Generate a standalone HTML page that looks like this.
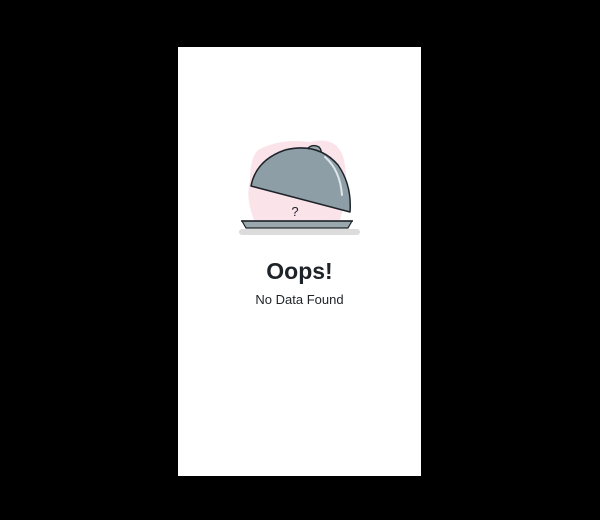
<!DOCTYPE html>
<html><head><style>
html,body{margin:0;padding:0;background:#000;width:600px;height:520px;overflow:hidden}
.card{position:absolute;left:178px;top:47px;width:243px;height:429px;background:#fff}
.t1{position:absolute;left:178px;width:243px;top:258px;text-align:center;font:bold 23px "Liberation Sans",sans-serif;color:#1d2329}
.t2{position:absolute;left:178px;width:243px;top:292px;text-align:center;font:13px "Liberation Sans",sans-serif;color:#1d2329}
</style></head><body>
<div class="card"></div>
<svg style="position:absolute;left:0;top:0" width="600" height="520">
<path d="M258 150 Q280 138 310 142 Q338 135 344 160 Q350 190 340 220 L255 222 Q245 200 250 180 Q250 158 258 150Z" fill="#fbe3ea"/>
<rect x="239" y="229" width="121" height="6" rx="3" fill="#dcdcdc"/>
<path d="M242 221 L352 221 L348 228 L246 228 Z" fill="#9aa8ae" stroke="#1d2329" stroke-width="1.2"/>
<line x1="241" y1="221" x2="353" y2="221" stroke="#1d2329" stroke-width="1.5"/>
<path d="M306 150 Q312 143 319 147 Q322 150 321 155" fill="#9aa8ae" stroke="#1d2329" stroke-width="1.3"/>
<path d="M251 186 Q256 160 285 150 Q318 142 338 165 Q352 185 350 212 Z" fill="#8d9ea6" stroke="#1d2329" stroke-width="1.5" stroke-linejoin="round"/>
<path d="M325 157 Q340 170 342 195" fill="none" stroke="#dfe6e9" stroke-width="2" stroke-linecap="round"/>
<text x="295" y="216" font-family="Liberation Sans,sans-serif" font-size="13" fill="#1d2329" text-anchor="middle">?</text>
</svg>
<div class="t1">Oops!</div>
<div class="t2">No Data Found</div>
</body></html>
